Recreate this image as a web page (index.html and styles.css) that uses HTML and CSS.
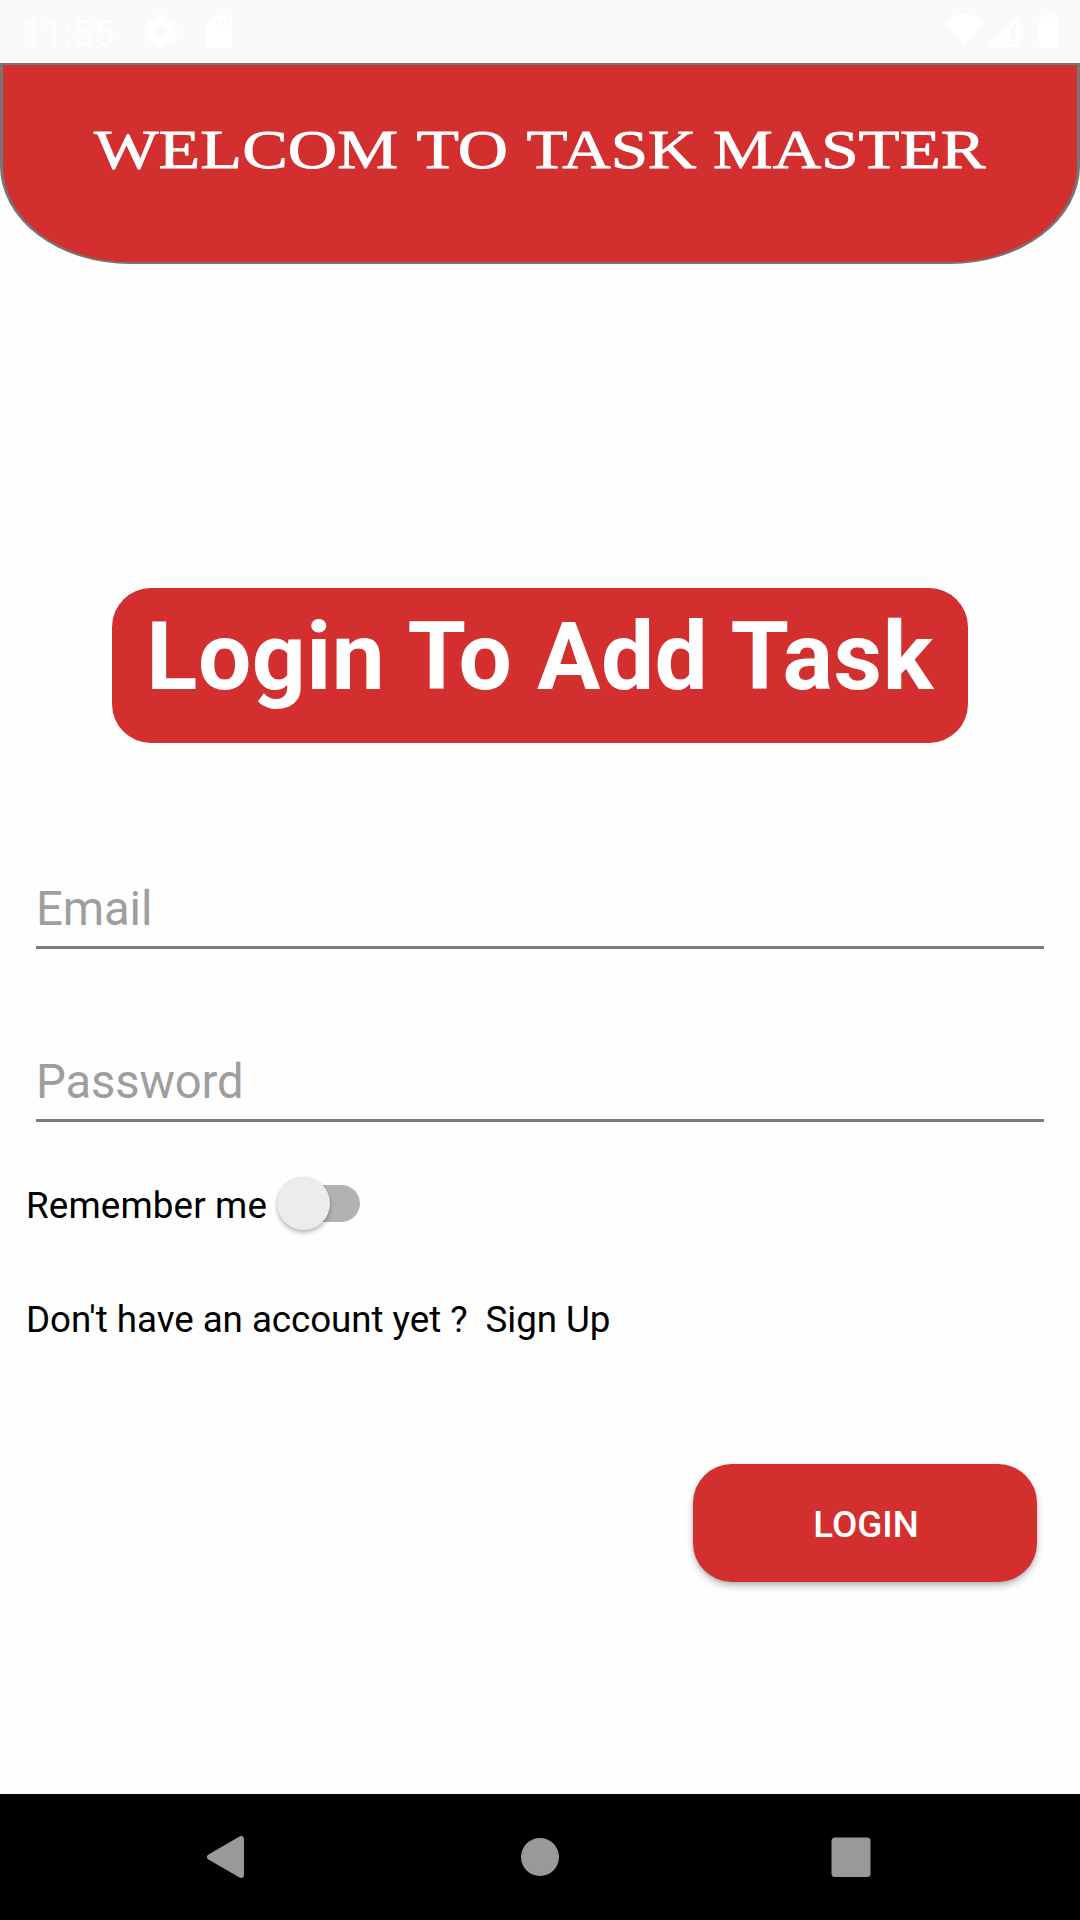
FILE: index.html
```html
<!DOCTYPE html>
<html lang="en">
<head>
<meta charset="utf-8">
<title>Task Master</title>
<link rel="stylesheet" href="styles.css">
</head>
<body>
<div class="screen">
  <div class="status">
    <span class="time">11:55</span>
    <svg class="gear" width="32" height="33" viewBox="2.500 2 19 20" preserveAspectRatio="none"><path fill="#fff" d="M19.14 12.94c.04-.3.06-.61.06-.94s-.02-.64-.07-.94l2.03-1.58a.49.49 0 0 0 .12-.61l-1.92-3.32a.49.49 0 0 0-.59-.22l-2.39.96a7 7 0 0 0-1.62-.94l-.36-2.54A.48.48 0 0 0 13.92 2h-3.84a.48.48 0 0 0-.47.41l-.36 2.54c-.59.24-1.13.57-1.62.94l-2.39-.96a.48.48 0 0 0-.59.22L2.74 8.87a.48.48 0 0 0 .12.61l2.03 1.58c-.05.3-.09.63-.09.94s.02.64.07.94l-2.03 1.58a.49.49 0 0 0-.12.61l1.92 3.32c.12.22.37.29.59.22l2.39-.96c.5.38 1.03.7 1.62.94l.36 2.54c.05.24.24.41.48.41h3.84c.24 0 .44-.17.47-.41l.36-2.54c.59-.24 1.13-.56 1.62-.94l2.39.96c.22.08.47 0 .59-.22l1.92-3.32a.48.48 0 0 0-.12-.61zM12 15.6a3.6 3.6 0 1 1 0-7.2 3.6 3.6 0 0 1 0 7.2z"/></svg>
    <svg class="card" width="26" height="33" viewBox="4 2 16 20" preserveAspectRatio="none"><path fill="#fff" d="M18 2h-8L4 8v12a2 2 0 0 0 2 2h12a2 2 0 0 0 2-2V4a2 2 0 0 0-2-2zm-6 6h-1.500V4H12zm3 0h-1.500V4H15zm3 0h-1.500V4H18z"/></svg>
    <svg class="wifi" width="39" height="32" viewBox="0 0 39 32"><path fill="#fff" d="M19.500 32 0 8Q19.500-8 39 8z"/></svg>
    <svg class="signal" width="33" height="32" viewBox="0 0 33 32"><path fill="#fff" fill-rule="evenodd" d="M33 0v32H0zM23 13v16h6V9z"/></svg>
    <svg class="battery" width="20" height="34" viewBox="0 0 20 34"><path fill="#fff" d="M6 0h8v3h4q2 0 2 2v27q0 2-2 2H2q-2 0-2-2V5q0-2 2-2h4z"/></svg>
  </div>
  <header class="banner">
    <svg width="1074" height="197" viewBox="3 65 1074 197">
      <g class="banner-text">
        <text x="94" y="168" textLength="304" lengthAdjust="spacingAndGlyphs">WELCOM</text>
        <text x="416.500" y="168" textLength="91.500" lengthAdjust="spacingAndGlyphs">TO</text>
        <text x="526.500" y="168" textLength="170" lengthAdjust="spacingAndGlyphs">TASK</text>
        <text x="713" y="168" textLength="272.500" lengthAdjust="spacingAndGlyphs">MASTER</text>
      </g>
    </svg>
  </header>
  <main class="form">
    <h1 class="heading">Login To Add Task</h1>
    <div class="field email">Email</div>
    <div class="field password">Password</div>
    <div class="remember"><span>Remember me</span><span class="switch"><span class="thumb"></span></span></div>
    <div class="signup"><span>Don't have an account yet ?</span><a class="link">Sign Up</a></div>
    <button class="login">LOGIN</button>
  </main>
  <nav class="nav">
    <svg width="1080" height="126" viewBox="0 0 1080 126"><g fill="#999"><path stroke="#999" stroke-width="6" stroke-linejoin="round" d="M210 63 241 45V81z"/><circle cx="540" cy="63" r="19"/><rect x="831.500" y="43.500" width="39" height="39.500" rx="3.500"/></g></svg>
  </nav>
</div>
</body>
</html>
```
FILE: styles.css
```css
* { box-sizing: border-box; }
body { margin: 0; background: #fefefe; font-family: Roboto, sans-serif; }
svg { display: block; flex: none; }
.screen { width: 1080px; height: 1920px; display: flex; flex-direction: column; overflow: hidden; }
.status { height: 63px; flex: none; background: #fafafa; display: flex; align-items: flex-start; padding: 14px 21px 0 22px; color: #fff; }
.time { width: 123px; font-size: 37px; line-height: 39px; }
.gear { margin-top: 1px; }
.card { margin: 1px 0 0 29px; }
.wifi { margin-left: auto; }
.signal { margin: 1px 0 0 3px; }
.battery { margin-left: 19px; }
.banner { height: 201px; flex: none; background: #d32f2f; border: solid #757575; border-width: 2px 3px; border-radius: 0 0 130px 130px / 0 0 98px 98px; }
.banner-text { font-family: "Liberation Serif", serif; font-size: 54px; fill: #fff; stroke: #fff; stroke-width: 0.800px; }
.form { flex: 1; display: flex; flex-direction: column; align-items: flex-start; }
.heading { width: 856px; height: 155px; margin: 324px 0 0 112px; border-radius: 39px; background: #d32f2f; color: #fff; text-align: center; font-size: 94.500px; line-height: 137px; font-weight: 700; letter-spacing: 0.500px; word-spacing: 0.600px; white-space: nowrap; }
.field { width: 1008px; height: 69px; margin-left: 36px; border-bottom: 3px solid #7c7c7c; color: #9e9e9e; font-size: 47.250px; line-height: 58px; letter-spacing: -0.150px; }
.email { margin-top: 137px; }
.password { margin-top: 104px; }
.remember, .signup { display: flex; margin-left: 26px; font-size: 36.750px; line-height: 50px; color: #000; }
.remember { margin-top: 59px; height: 50px; letter-spacing: 0.150px; }
.signup { margin-top: 64px; gap: 18px; letter-spacing: -0.050px; }
.switch { width: 72px; height: 37px; margin: 4px 0 0 21px; border-radius: 19px; background: #b2b2b2; }
.thumb { display: block; width: 53px; height: 53px; margin: -8px 0 0 -11px; border-radius: 50%; background: #ececec; box-shadow: 0 3px 4px rgba(0,0,0,.25), 0 0 2px rgba(0,0,0,.1); }
.login { width: 344px; height: 118px; margin: 119px 0 0 693px; padding: 3px 0 0 2px; border: 0; border-radius: 39px; background: #d32f2f; color: #fff; font: 500 36.750px Roboto, sans-serif; box-shadow: 0 4px 7px rgba(0,0,0,.25), 0 1px 3px rgba(0,0,0,.1); }
.nav { height: 126px; flex: none; background: #000; }
```
